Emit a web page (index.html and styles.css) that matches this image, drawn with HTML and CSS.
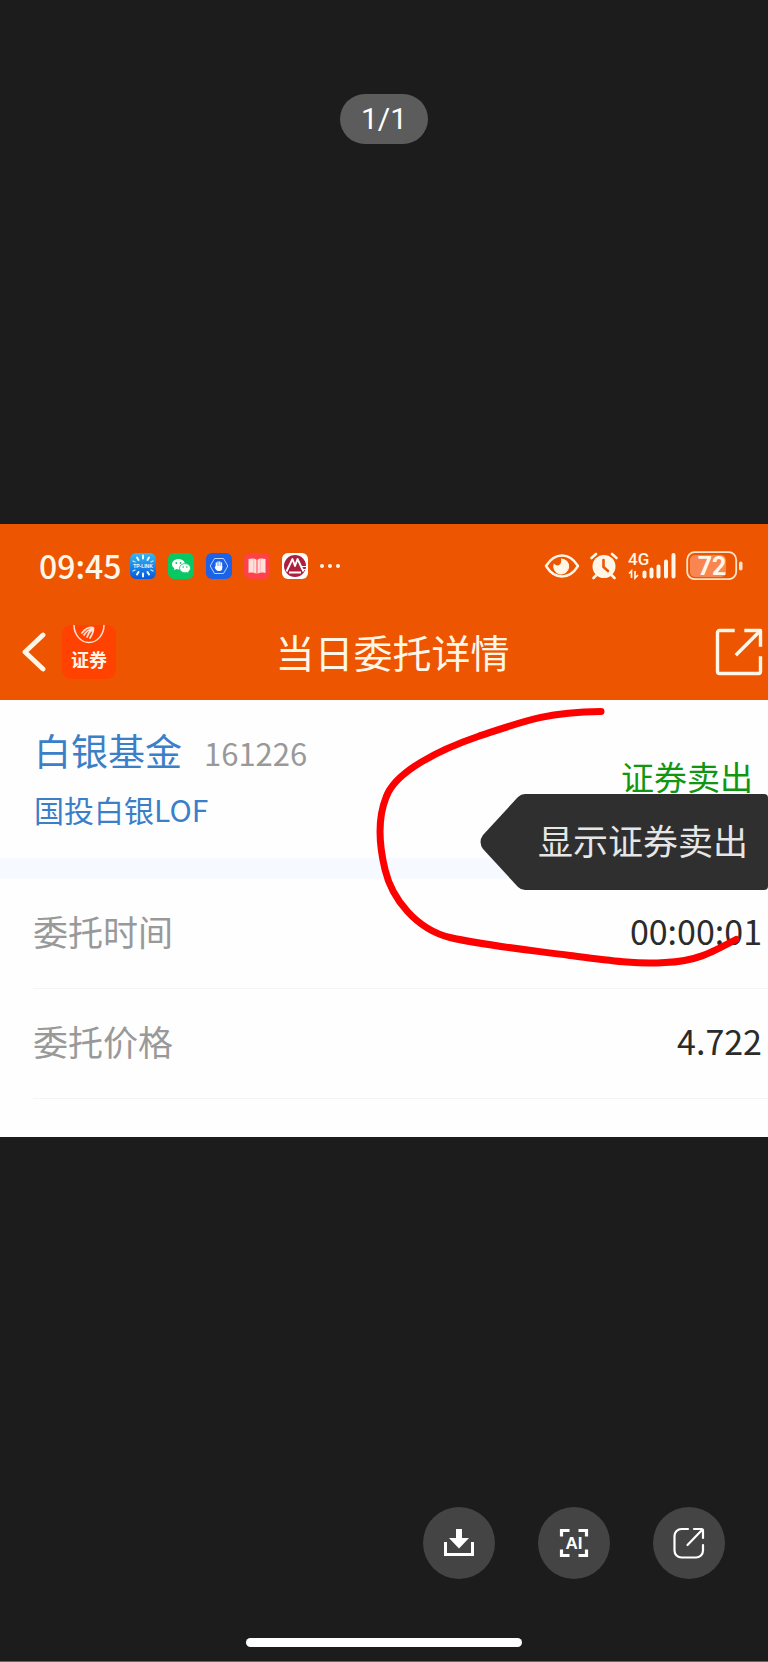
FILE: index.html
```html
<!DOCTYPE html>
<html lang="zh-CN">
<head>
<meta charset="utf-8">
<meta name="viewport" content="width=device-width, initial-scale=1">
<title>当日委托详情</title>
<link rel="stylesheet" href="styles.css">
</head>
<body>
<div class="viewer">
  <header class="viewer-top"><span class="counter">1/1</span></header>

  <main class="photo">
    <div class="orange">
      <div class="status">
        <span class="time">09:45</span>
        <div class="apps">
          <svg class="app" viewBox="0 0 26 26">
            <defs><linearGradient id="tp" x1="0" y1="0" x2="0" y2="1"><stop offset="0" stop-color="#38b8ee"/><stop offset="1" stop-color="#0759df"/></linearGradient></defs>
            <rect width="26" height="26" rx="6" fill="url(#tp)"/>
            <path d="M13 2.500v3M13 20.500v3M7 4.500l1.500 2.500M19 4.500l-1.500 2.500M7 21.500l1.500-2.500M19 21.500l-1.500-2.500" stroke="#e9fbff" stroke-width="2" stroke-linecap="round"/>
            <path d="M3 8l2 1M23 8l-2 1M3 18l2-1M23 18l-2-1" stroke="#bcecff" stroke-width="1.300" stroke-linecap="round"/>
            <text x="13" y="15" class="tp-text">TP-LINK</text>
          </svg>
          <svg class="app" viewBox="0 0 26 26">
            <rect width="26" height="26" rx="6" fill="#07c863"/>
            <path d="M10.500 6C6.900 6 4 8.300 4 11.200c0 1.700.9 3.100 2.400 4L6 17.300l2.300-1.200c.7.2 1.400.3 2.200.3 3.600 0 6.500-2.300 6.500-5.200S14.100 6 10.500 6z" fill="#fff"/>
            <path d="M17 10.600c-3.100 0-5.500 2-5.500 4.600s2.400 4.600 5.500 4.600c.7 0 1.300-.1 1.900-.3l1.900 1-.4-1.800c1.300-.9 2.100-2.100 2.100-3.500 0-2.600-2.400-4.600-5.500-4.600z" fill="#fff" stroke="#07c863" stroke-width=".8"/>
            <g fill="#07c863"><circle cx="8.300" cy="10" r=".9"/><circle cx="12.600" cy="10" r=".9"/><circle cx="15.200" cy="14" r=".8"/><circle cx="18.800" cy="14" r=".8"/></g>
          </svg>
          <svg class="app" viewBox="0 0 26 26">
            <rect width="26" height="26" rx="6" fill="#1c62e8"/>
            <path d="M8.500 5.500h9l4.300 7.500-4.300 7.500h-9L4.200 13z" fill="none" stroke="#b9d2ff" stroke-width="1"/>
            <path d="M10.300 10v5M12 9v5M13.800 8.800v5M15.500 10v5" stroke="#fff" stroke-width="1.300" stroke-linecap="round"/>
            <path d="M9.700 13h6.500v2.500c0 1.500-1 2.500-2.500 2.500h-1.200c-1.700 0-2.800-1.200-3.800-3.500z" fill="#fff"/>
          </svg>
          <svg class="app" viewBox="0 0 26 26">
            <rect width="26" height="26" rx="6" fill="#ff4148"/>
            <path d="M4.500 6c3-1 6-.8 8 .7v14c-2-1.300-5-1.500-8-.7z" fill="#ffe0dd"/>
            <path d="M21.500 6c-3-1-6-.8-8 .7v14c2-1.300 5-1.500 8-.7z" fill="#ffe0dd"/>
            <path d="M9.700 5.500v14M16.300 5.500v14" stroke="#ffb5b3" stroke-width="1"/>
          </svg>
          <svg class="app" viewBox="0 0 26 26">
            <rect width="26" height="26" rx="6" fill="#fff"/>
            <circle cx="13" cy="13" r="11" fill="#ad1f3e"/>
            <path d="M4.500 18.500L10.500 6l2.500 7 2.500-7 6 12.500M7 19.500h12" fill="none" stroke="#fff" stroke-width="1.900" stroke-linejoin="round"/>
            <path d="M19.500 13.500h5M21 16.500h4" stroke="#fff" stroke-width="1"/>
          </svg>
          <svg class="more" viewBox="0 0 20 6"><g fill="#fff6e8"><circle cx="2" cy="3" r="2"/><circle cx="10" cy="3" r="2"/><circle cx="18" cy="3" r="2"/></g></svg>
        </div>
        <div class="system">
          <svg width="36" height="26" viewBox="0 0 36 26">
            <path d="M2 13C7 5 12 2.500 18 2.500S29 5 34 13c-5 8-10 10.500-16 10.500S7 21 2 13z" fill="none" stroke="#fff6e8" stroke-width="2.400" stroke-linejoin="round"/>
            <path d="M17 5.500a8 8 0 1 1-7.200 5c2 2.200 4.600 2.500 6 1 1.500-1.700 1.700-3.800 1.200-6z" fill="#fff6e8"/>
          </svg>
          <svg width="28" height="28" viewBox="0 0 28 28">
            <circle cx="14" cy="14.500" r="11.500" fill="#fff6e8"/>
            <path d="M1.500 6L6 2M26.500 6L22 2M6.500 23l-3 3M21.500 23l3 3" stroke="#fff6e8" stroke-width="2.600" stroke-linecap="round"/>
            <path d="M13.500 8v7l4.500 4" fill="none" stroke="#ed5500" stroke-width="2.600" stroke-linecap="round"/>
          </svg>
          <svg width="48" height="36" viewBox="0 0 48 36">
            <text x="0" y="17" class="net-text">4G</text>
            <path d="M3.500 30v-7L1 25.500M7 23v7l3-3" fill="none" stroke="#fff6e8" stroke-width="1.700"/>
            <path d="M16.500 28.500v-4M23.500 28.500v-7M30.500 28.500v-10M38 28.500v-15M45.500 28.500V7" stroke="#fff6e8" stroke-width="4" stroke-linecap="round"/>
          </svg>
          <svg width="58" height="36" viewBox="0 0 58 36">
            <rect x="4" y="7" width="36" height="22" rx="5" fill="#f98550"/>
            <rect x="1.200" y="4.200" width="49" height="27" rx="7.500" fill="none" stroke="#ffe3c8" stroke-width="1.800"/>
            <rect x="53" y="13.500" width="3.500" height="9" rx="1.700" fill="#ffe3c8"/>
            <text x="26" y="27" class="battery-text">72</text>
          </svg>
        </div>
      </div>
      <div class="nav">
        <div class="nav-left">
          <button class="icon-button" type="button" aria-label="返回">
            <svg width="24" height="40" viewBox="0 0 24 40"><path d="M21 3L3 20l18 17" fill="none" stroke="#fff6e8" stroke-width="4.800" stroke-linecap="round" stroke-linejoin="round"/></svg>
          </button>
          <div class="broker">
            <svg width="54" height="20" viewBox="0 0 54 20">
              <path d="M12 0a15 17.500 0 0 0 30 0" fill="none" stroke="#ffe2d3" stroke-width="1.500"/>
              <path d="M20 8c3-4 7-6 11-5.500M22 10c2-3.500 5-5.500 9-6.500M25 12c1-3 3-6 6-8M28 13c2-3 3.500-6 3.500-10" fill="none" stroke="#ffe2d3" stroke-width="1.700" stroke-linecap="round"/>
            </svg>
            <span class="broker-name">证券</span>
          </div>
        </div>
        <h1 class="title">当日委托详情</h1>
        <button class="icon-button share" type="button" aria-label="分享">
          <svg width="48" height="48" viewBox="0 0 48 48" fill="none" stroke="#fff6e8" stroke-width="3.400" stroke-linecap="square" stroke-linejoin="round"><path d="M18 2.500H4.500a2 2 0 0 0-2 2v39a2 2 0 0 0 2 2h39a2 2 0 0 0 2-2V30M31 2.500h14.500V17"/><path d="M44 4L22 26"/></svg>
        </button>
      </div>
    </div>

    <section class="fund">
      <div class="fund-info">
        <div class="fund-line"><span class="fund-name">白银基金</span><span class="fund-code">161226</span></div>
        <div class="fund-full">国投白银LOF</div>
      </div>
      <span class="side">证券卖出</span>
      <div class="tip">
        <svg class="tip-arrow" width="48" height="96" viewBox="0 0 48 96"><path d="M48 0h-3q-4 0-7 3L3 41q-5 7 0 14l35 38q3 3 7 3h3z" fill="#2f2f2f"/></svg>
        <span class="tip-text">显示证券卖出</span>
      </div>
    </section>

    <dl class="details">
      <div class="row"><dt>委托时间</dt><dd>00:00:01</dd></div>
      <div class="row"><dt>委托价格</dt><dd>4.722</dd></div>
    </dl>

    <svg class="mark" viewBox="0 0 768 612" aria-hidden="true">
      <path d="M601 187C545 188 526 196 478 212C440 225 395 247 386 273C378 293 379 320 385 345C392 375 417 405 450 413C485 421 525 425 570 431C610 436 635 440 665 438C695 437 710 429 736 415" fill="none" stroke="#fd0000" stroke-width="7" stroke-linecap="round"/>
    </svg>
  </main>

  <footer class="viewer-bottom">
    <div class="tools">
      <button class="tool" type="button" aria-label="下载">
        <svg width="32" height="32" viewBox="0 0 32 32"><path d="M13 2h6v9h7L16 21.500 6 11h7z" fill="#fff"/><path d="M2.500 15v12.500h27V15" fill="none" stroke="#fff" stroke-width="3"/></svg>
      </button>
      <button class="tool" type="button" aria-label="AI 识别">
        <svg width="32" height="32" viewBox="0 0 32 32"><path d="M11.500 3.500h-8v6M20.500 3.500h8v6M3.500 22.500v6h8M28.500 22.500v6h-8" fill="none" stroke="#fff" stroke-width="3.200"/><text x="16" y="22" class="ai-text">AI</text></svg>
      </button>
      <button class="tool" type="button" aria-label="分享">
        <svg width="32" height="32" viewBox="0 0 32 32" fill="none" stroke="#fff" stroke-width="2.200" stroke-linecap="round" stroke-linejoin="round"><path d="M15 2H8.500a7 7 0 0 0-7 7v14.500a7 7 0 0 0 7 7H23a7 7 0 0 0 7-7V18M21 2h7.500q1.500 0 1.500 1.500V11M29 3L14.500 18"/></svg>
      </button>
    </div>
    <div class="home"></div>
  </footer>
</div>
</body>
</html>
```
FILE: styles.css
```css
* { box-sizing: border-box; }

body {
  margin: 0;
  background: #1c1c1c;
  font-family: "Noto Sans CJK SC", sans-serif;
}

button {
  padding: 0;
  border: 0;
  background: none;
  cursor: pointer;
}

svg { display: block; flex: none; }

.viewer {
  min-height: 100vh;
  display: grid;
  grid-template-rows: 1fr auto 1fr;
  grid-template-columns: 100%;
  border-bottom: 1px solid #666;
}

.viewer-top {
  display: flex;
  justify-content: center;
  align-items: flex-start;
  padding-top: 94px;
}

.counter {
  width: 88px;
  border-radius: 25px;
  background: #5c5c5c;
  color: #fff;
  font-family: Roboto, sans-serif;
  font-size: 30px;
  line-height: 50px;
  text-align: center;
}

.photo {
  position: relative;
  background: #fefefe;
  padding-bottom: 38px;
}

.orange { background: #ed5500; color: #fff6e8; }

.status {
  height: 84px;
  display: flex;
  align-items: center;
  padding: 0 24px 0 39px;
}

.time {
  padding-bottom: 2px;
  font-size: 32px;
  font-weight: 500;
  line-height: 40px;
}

.apps {
  display: flex;
  align-items: center;
  gap: 12px;
  margin-left: 8px;
}

.app { width: 26px; height: 26px; }
.more { width: 20px; height: 6px; }

.tp-text {
  font: bold 5px "Liberation Sans", sans-serif;
  fill: #e9fbff;
  text-anchor: middle;
}

.system {
  display: flex;
  align-items: center;
  gap: 10px;
  margin-left: auto;
}

.net-text { font: 500 17px Roboto, sans-serif; fill: #fff6e8; }
.battery-text { font: 700 25px Roboto, sans-serif; fill: #fff6e8; text-anchor: middle; }

.nav {
  height: 92px;
  display: grid;
  grid-template-columns: 1fr auto 1fr;
  align-items: center;
  padding: 0 5px 4px 22px;
}

.nav-left { display: flex; align-items: center; gap: 16px; }

.broker {
  width: 54px;
  height: 54px;
  border-radius: 9px;
  background: #ff4200;
}

.broker-name {
  display: block;
  font-size: 18px;
  font-weight: 700;
  line-height: 28px;
  text-align: center;
}

.title {
  margin: 0;
  padding-bottom: 2px;
  font-size: 39px;
  font-weight: 400;
  line-height: 56px;
}

.share { justify-self: end; }

.fund {
  position: relative;
  display: flex;
  justify-content: space-between;
  align-items: flex-start;
  padding: 28px 15px 29px 34px;
  border-bottom: 21px solid #f6f9ff;
}

.fund-info { display: grid; gap: 14px; }
.fund-line { display: flex; align-items: baseline; gap: 22px; line-height: 44px; }
.fund-name { font-size: 37px; color: #3b7fc9; }
.fund-code { font-size: 31px; color: #999; }
.fund-full { font-size: 30px; line-height: 40px; color: #3b7fc9; }
.side { padding-top: 26px; font-size: 33px; line-height: 44px; color: #119611; }

/* Hint bubble that overlaps the fund card and the band below it. */
.tip {
  position: absolute;
  top: 94px;
  right: 0;
  display: flex;
}

.tip-text {
  padding: 0 20px 4px 10px;
  border-radius: 0 4px 4px 0;
  background: #2f2f2f;
  color: #e6e6e6;
  font-size: 35px;
  line-height: 92px;
}

.details { margin: 0; }

.row {
  display: flex;
  justify-content: space-between;
  margin-left: 33px;
  padding: 0 6px 5px 0;
  border-bottom: 1px solid #f4f4f4;
  font-size: 35px;
  line-height: 104px;
}

.row dt { color: #999; }
.row dd { margin: 0; font-size: 34px; color: #2b2b2b; }

.mark {
  position: absolute;
  top: 0;
  left: 0;
  width: 100%;
  height: 100%;
  pointer-events: none;
}

.viewer-bottom {
  display: flex;
  flex-direction: column;
  justify-content: flex-end;
  padding-bottom: 14px;
}

.tools {
  display: flex;
  justify-content: flex-end;
  gap: 43px;
  padding: 0 43px 59px 0;
}

.tool {
  width: 72px;
  height: 72px;
  display: grid;
  place-items: center;
  border-radius: 50%;
  background: #444;
}

.ai-text { font: bold 17px "Liberation Sans", sans-serif; fill: #fff; text-anchor: middle; }

.home {
  width: 36%;
  height: 9px;
  margin: 0 auto;
  border-radius: 5px;
  background: #fff;
}
```
